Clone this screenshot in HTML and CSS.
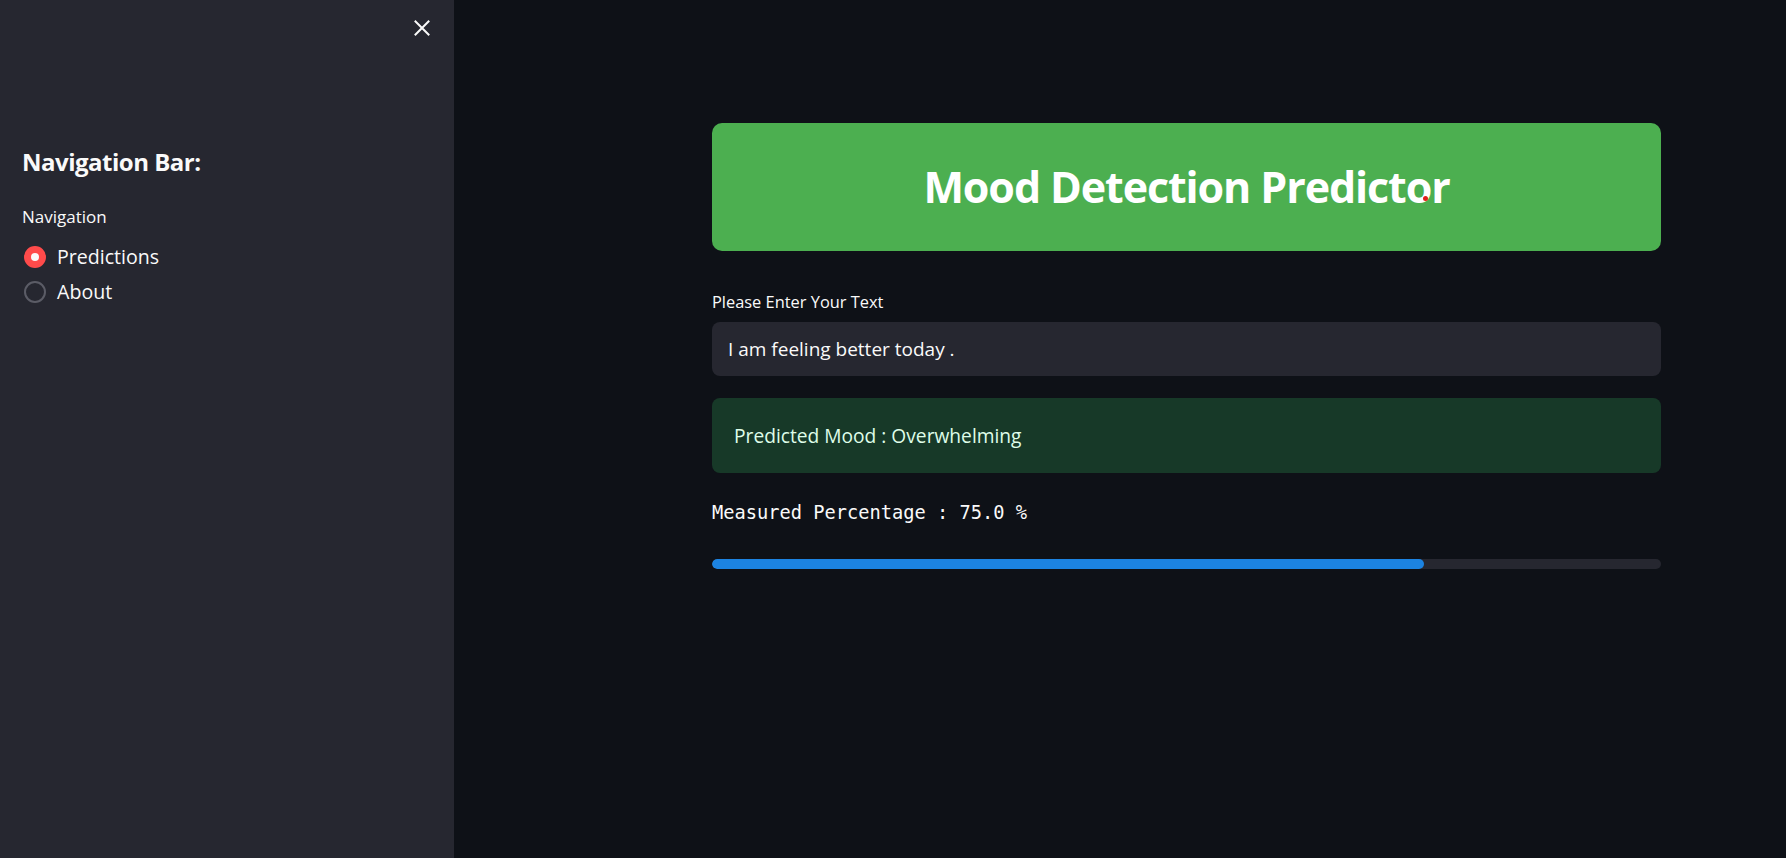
FILE: index.html
```html
<!DOCTYPE html>
<html>
<head>
<meta charset="utf-8">
<link rel="stylesheet" href="styles.css">
</head>
<body>
<div class="app">
  <aside class="sidebar">
    <div class="sidebar-top">
      <button class="close-btn" aria-label="Close">
        <svg width="16" height="16" viewBox="0 0 16 16"><path d="M1.5 1.5 L14.5 14.5 M14.5 1.5 L1.5 14.5" stroke="#fafafa" stroke-width="2" fill="none" stroke-linecap="square"/></svg>
      </button>
    </div>
    <div class="sidebar-body">
      <h3 class="side-title">Navigation Bar:</h3>
      <div class="radio-label">Navigation</div>
      <div class="radio-group">
        <label class="radio-item"><span class="radio checked"></span><span class="radio-text">Predictions</span></label>
        <label class="radio-item"><span class="radio"></span><span class="radio-text">About</span></label>
      </div>
    </div>
  </aside>
  <main class="main">
    <div class="content">
      <div class="banner">
        <h1 class="banner-title">Mood Detection Predictor</h1>
        <span class="cursor-dot"></span>
      </div>
      <div class="field">
        <div class="field-label">Please Enter Your Text</div>
        <div class="input">I am feeling better today .</div>
      </div>
      <div class="success">Predicted Mood : Overwhelming</div>
      <div class="mono">Measured Percentage : 75.0 %</div>
      <div class="progress"><div class="progress-fill" style="width:75%"></div></div>
    </div>
  </main>
</div>
</body>
</html>
```
FILE: styles.css
```css
* { box-sizing: border-box; }
html, body { margin: 0; padding: 0; }
body {
  background: #0e1117;
  color: #fafafa;
  font-family: "Open Sans", "Noto Sans", sans-serif;
  width: 1786px;
  height: 858px;
  overflow: hidden;
}
.app { display: flex; height: 858px; }
.sidebar {
  width: 454px;
  flex: 0 0 454px;
  background: #262730;
  display: flex;
  flex-direction: column;
}
.sidebar-top {
  display: flex;
  justify-content: flex-end;
  padding: 20px 24px 0 0;
}
.close-btn {
  background: none;
  border: 0;
  padding: 0;
  width: 16px;
  height: 16px;
  display: block;
}
.close-btn svg { display: block; }
.sidebar-body { padding: 0 0 0 22px; }
.side-title {
  margin: 110px 0 0 0;
  font-size: 24px;
  line-height: 32px;
  font-weight: 700;
  letter-spacing: -0.5px;
}
.radio-label {
  margin-top: 29px;
  font-size: 17px;
  line-height: 20px;
}
.radio-group {
  margin-top: 18px;
  display: flex;
  flex-direction: column;
  gap: 11px;
}
.radio-item { display: flex; align-items: center; gap: 11px; padding-left: 2px; }
.radio {
  width: 22px;
  height: 22px;
  border-radius: 50%;
  border: 2px solid #5b5c66;
  display: inline-block;
  position: relative;
}
.radio.checked {
  background: #ff4b4b;
  border-color: #ff4b4b;
}
.radio.checked::after {
  content: "";
  position: absolute;
  left: 50%;
  top: 50%;
  width: 8px;
  height: 8px;
  margin: -4px 0 0 -4px;
  border-radius: 50%;
  background: #fafafa;
}
.radio-text { font-size: 19.6px; line-height: 24px; }

.main { flex: 1; }
.content {
  width: 949px;
  margin-left: 258px;
  padding-top: 123px;
}
.banner {
  position: relative;
  height: 128px;
  background: #4caf50;
  border-radius: 10px;
  display: flex;
  align-items: center;
  justify-content: center;
}
.banner-title {
  margin: 0;
  font-size: 43px;
  line-height: 56px;
  font-weight: 700;
  color: #ffffff;
  letter-spacing: -1.1px;
}
.cursor-dot {
  position: absolute;
  left: 711px;
  top: 73px;
  width: 5px;
  height: 5px;
  border-radius: 50%;
  background: #e0201b;
}
.field { margin-top: 41px; }
.field-label {
  font-size: 16.4px;
  line-height: 20px;
}
.input {
  margin-top: 10px;
  height: 54px;
  background: #262730;
  border-radius: 8px;
  padding: 0 16px;
  display: flex;
  align-items: center;
  font-size: 19px;
}
.success {
  margin-top: 22px;
  height: 75px;
  background: #173928;
  color: #dffde9;
  border-radius: 8px;
  padding: 0 22px;
  display: flex;
  align-items: center;
  font-size: 19.2px;
}
.mono {
  margin-top: 28px;
  font-family: "DejaVu Sans Mono", "Liberation Mono", monospace;
  font-size: 18.7px;
  line-height: 24px;
}
.progress {
  margin-top: 34px;
  height: 10px;
  border-radius: 5px;
  background: #262730;
  overflow: hidden;
}
.progress-fill {
  height: 100%;
  background: #1c83e1;
  border-radius: 5px;
}
```
